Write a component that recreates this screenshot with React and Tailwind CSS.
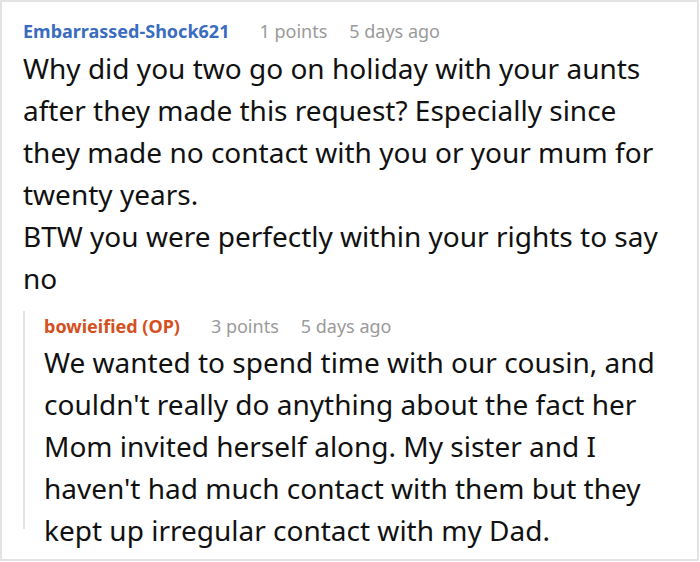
export default function App() {
  return (
    <div className="w-[700px] h-[562px] bg-white overflow-hidden" style={{ fontFamily: '"Noto Sans", sans-serif' }}>
      <div className="w-[699px] h-[561px] border-2 border-[#e3e3e3] pl-[21px] pt-[17px] pr-[22px]">
        <div className="flex items-center text-[18px] leading-[24px]">
          <span className="font-bold text-[#3a6cc0]">Embarrassed-Shock621</span>
          <span className="ml-[30px] text-[#9a9a9a]">1 points</span>
          <span className="ml-[22px] text-[#9a9a9a]">5 days ago</span>
        </div>
        <div className="text-[28px] leading-[42px] text-[#111] mt-[4px]">
          <p>Why did you two go on holiday with your aunts after they made this request? Especially since they made no contact with you or your mum for twenty years.</p>
          <p>BTW you were perfectly within your rights to say no</p>
        </div>
        <div className="mt-[12px] h-[218px] border-l-2 border-[#e3e3e3] pl-[19px] pt-[3px]">
          <div className="flex items-center text-[18px] leading-[24px]">
            <span className="font-bold text-[#d4501e]">bowieified (OP)</span>
            <span className="ml-[31px] text-[#9a9a9a]">3 points</span>
            <span className="ml-[22px] text-[#9a9a9a]">5 days ago</span>
          </div>
          <div className="text-[28px] leading-[42px] text-[#111] mt-[3px]">
            <p>We wanted to spend time with our cousin, and couldn't really do anything about the fact her Mom invited herself along. My sister and I haven't had much contact with them but they kept up irregular contact with my Dad.</p>
          </div>
        </div>
      </div>
    </div>
  );
}
